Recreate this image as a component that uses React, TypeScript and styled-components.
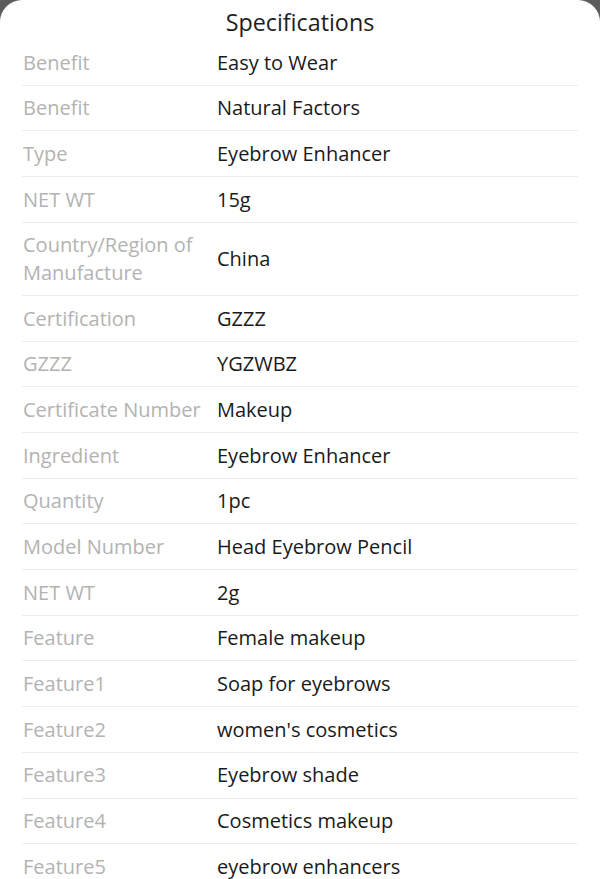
import styled, { createGlobalStyle } from 'styled-components';

const Global = createGlobalStyle`
  html, body {
    margin: 0;
    padding: 0;
    background: #5c5c5c;
  }
  body {
    font-family: "Open Sans", "Noto Sans", sans-serif;
  }
`;

const Sheet = styled.div`
  background: #fff;
  border-radius: 22px 22px 0 0;
  min-height: 879px;
  overflow: hidden;
`;

const Title = styled.h2`
  margin: 0;
  padding: 7px 0 3px;
  text-align: center;
  font-size: 23.3px;
  line-height: 30px;
  font-weight: 400;
  color: #1e1e1e;
`;

const List = styled.div`
  padding: 0 22px;
`;

const Row = styled.div`
  display: flex;
  align-items: center;
  padding: 8.6px 0;
  border-bottom: 1px solid #ededed;
  font-size: 20px;
  line-height: 27.5px;
`;

const Label = styled.div`
  box-sizing: border-box;
  flex: 0 0 195px;
  padding-left: 1px;
  color: #b3b3b3;
`;

const Value = styled.div`
  flex: 1;
  color: #1a1a1a;
`;

const specs: [string, string][] = [
  ['Benefit', 'Easy to Wear'],
  ['Benefit', 'Natural Factors'],
  ['Type', 'Eyebrow Enhancer'],
  ['NET WT', '15g'],
  ['Country/Region of Manufacture', 'China'],
  ['Certification', 'GZZZ'],
  ['GZZZ', 'YGZWBZ'],
  ['Certificate Number', 'Makeup'],
  ['Ingredient', 'Eyebrow Enhancer'],
  ['Quantity', '1pc'],
  ['Model Number', 'Head Eyebrow Pencil'],
  ['NET WT', '2g'],
  ['Feature', 'Female makeup'],
  ['Feature1', 'Soap for eyebrows'],
  ['Feature2', "women's cosmetics"],
  ['Feature3', 'Eyebrow shade'],
  ['Feature4', 'Cosmetics makeup'],
  ['Feature5', 'eyebrow enhancers'],
];

export default function App() {
  return (
    <>
      <Global />
      <Sheet>
        <Title>Specifications</Title>
        <List>
          {specs.map(([k, v], i) => (
            <Row key={i}>
              <Label>{k}</Label>
              <Value>{v}</Value>
            </Row>
          ))}
        </List>
      </Sheet>
    </>
  );
}
